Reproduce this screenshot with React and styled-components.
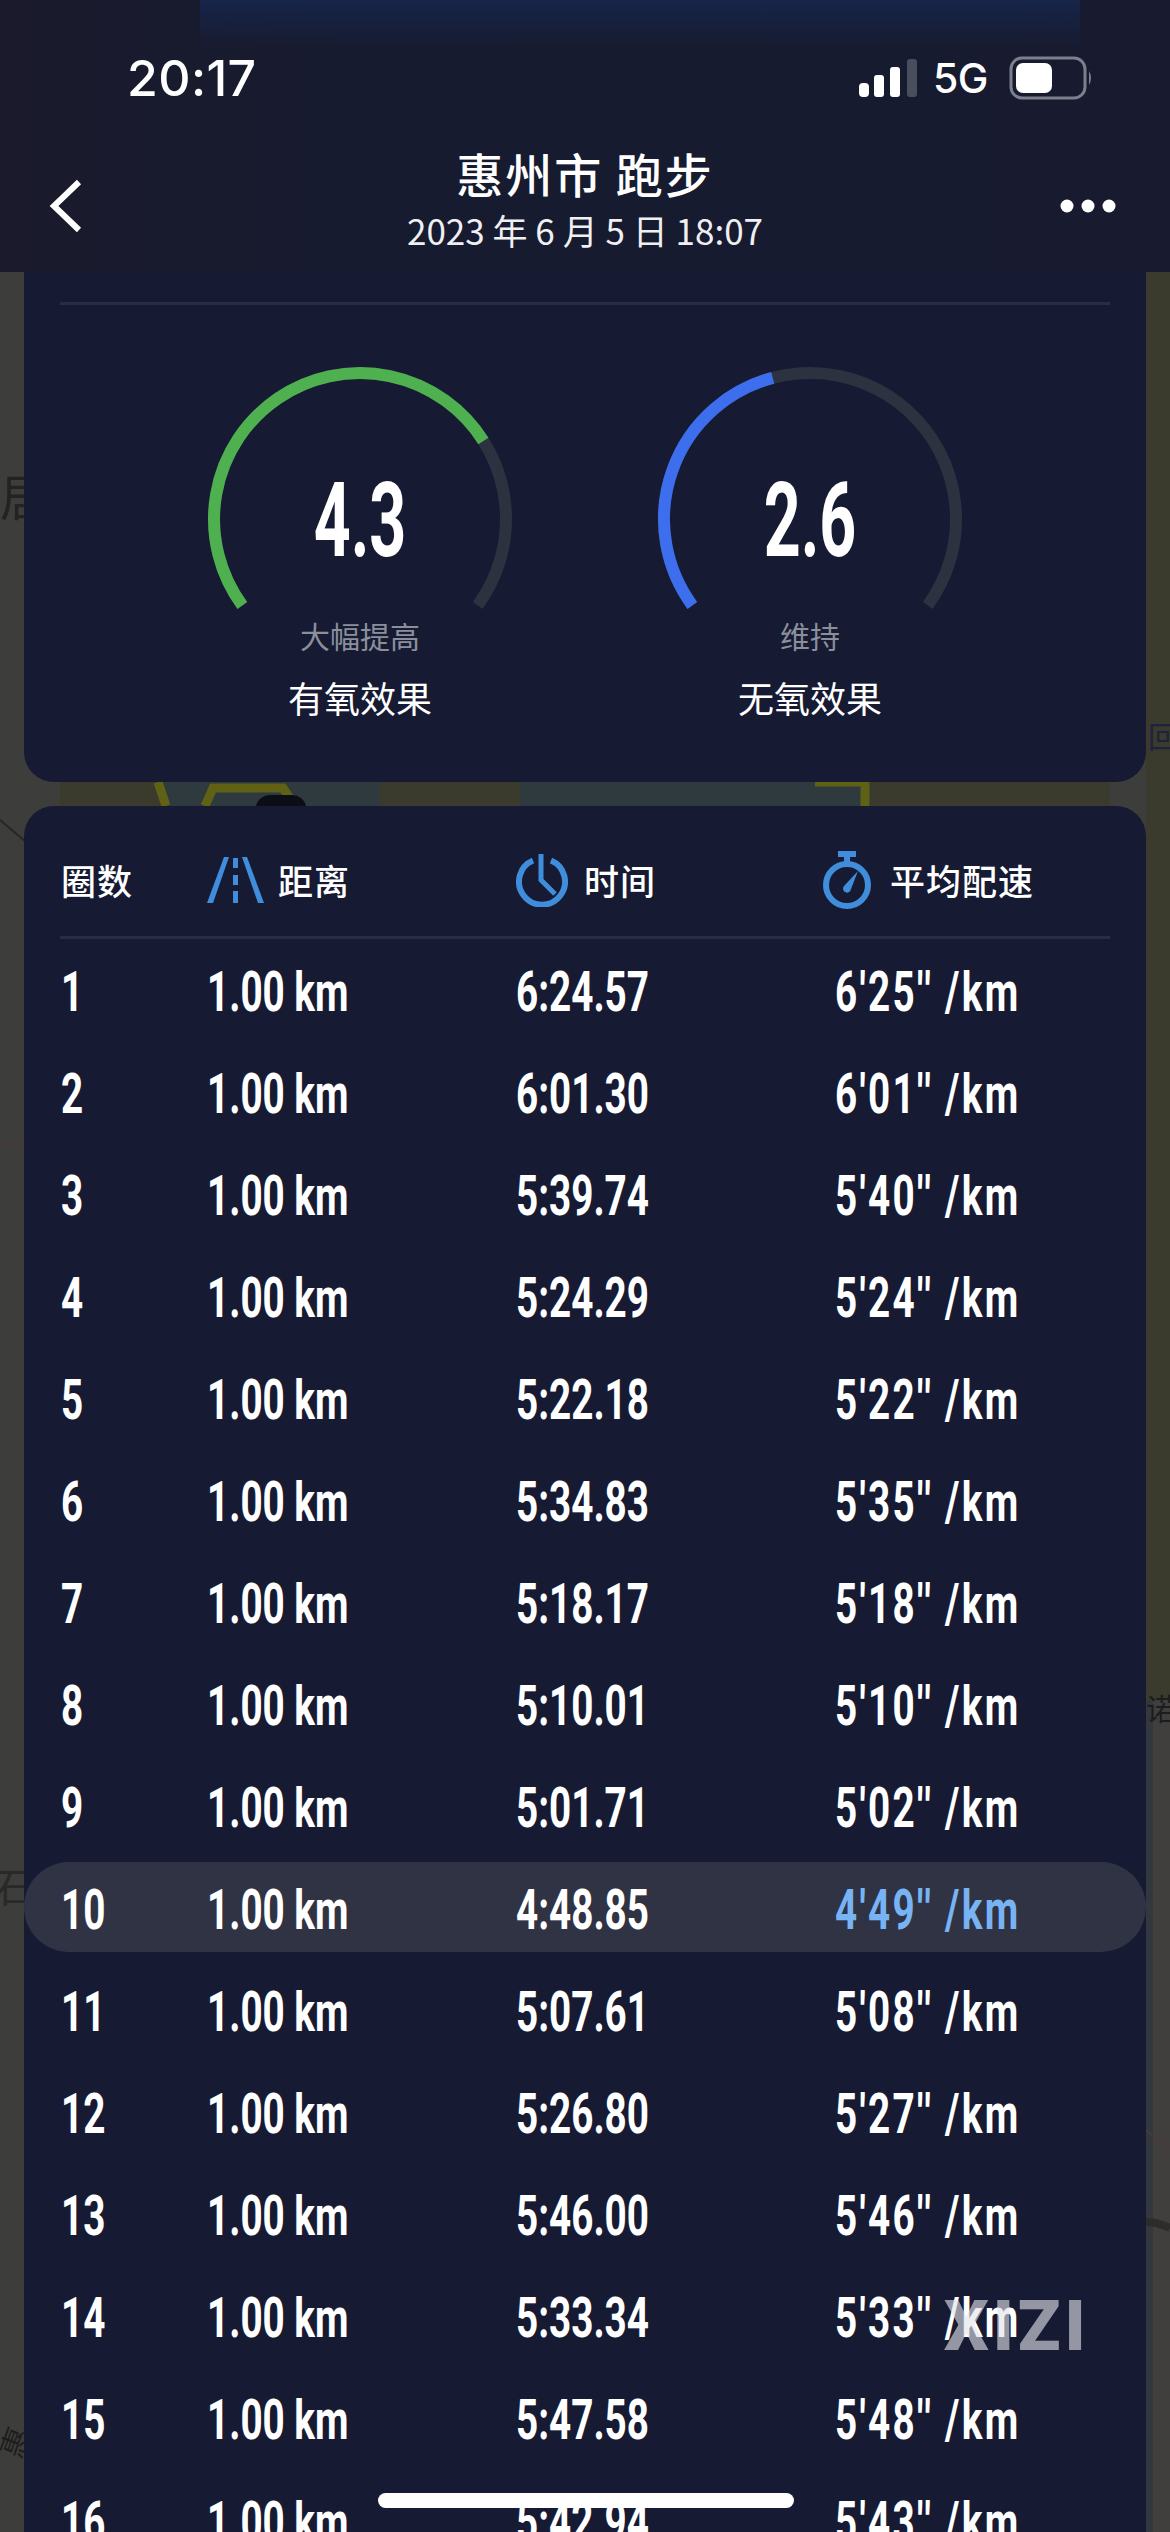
import React from "react";
import styled, { createGlobalStyle } from "styled-components";

const Global = createGlobalStyle`
  html, body { margin: 0; padding: 0; background: #3d3d3b; }
  * { box-sizing: border-box; }
`;

const CJK = `"Noto Sans CJK SC", "Noto Sans", sans-serif`;
const NUM = `Roboto, "Liberation Sans", sans-serif`;

const Screen = styled.div`
  position: relative;
  width: 1170px;
  height: 2532px;
  overflow: hidden;
  color: #fff;
  font-family: ${CJK};
`;
const MapLayer = styled.svg`
  position: absolute;
  inset: 0;
`;
const Page = styled.div`
  position: relative;
  display: flex;
  flex-direction: column;
`;
const Header = styled.header`
  height: 272px;
  padding-top: 50px;
  background:
    linear-gradient(180deg, #16254a 0, #16244600 48px) no-repeat 200px 0 / 880px 48px,
    linear-gradient(90deg, #1a1a2c 0, #171b2f 30%, #171b2f 70%, #181b2f 100%);
`;
const StatusBar = styled.div`
  height: 56px;
  display: flex;
  align-items: center;
  justify-content: space-between;
  padding: 0 77px 0 127px;
`;
const Clock = styled.span`
  font: 500 50px/56px Inter, Roboto, sans-serif;
  letter-spacing: 0.4px;
`;
const StatusRight = styled.div`
  display: flex;
  align-items: center;
  gap: 21px;
`;
const Carrier = styled.span`
  margin-left: -5px;
  font: 500 41px/56px Inter, Roboto, sans-serif;
  letter-spacing: -0.5px;
`;
const Nav = styled.div`
  display: grid;
  grid-template-columns: 1fr auto 1fr;
  align-items: center;
  margin-top: 34px;
  padding: 0 48px;
  height: 120px;
`;
const NavIcon = styled.svg`
  margin-top: 12px;
  margin-right: ${(p) => (p.$side ? "6px" : "0")};
  justify-self: ${(p) => p.$side || "start"};
`;
const TitleBlock = styled.div`
  display: flex;
  flex-direction: column;
  align-items: center;
  gap: 5px;
  margin-bottom: 6px;
`;
const Title = styled.div`
  font: 500 47px/60px ${CJK};
  letter-spacing: 2px;
`;
const Subtitle = styled.div`
  font: 400 35px/44px ${CJK};
  color: #f0f0f3;
`;
const Card = styled.section`
  margin: 0 24px;
  background: #161b33;
`;
const EffectCard = styled(Card)`
  height: 510px;
  padding: 30px 36px 0;
  border-radius: 0 0 30px 30px;
`;
const Divider = styled.div`
  height: 3px;
  background: #272c48;
`;
const Gauges = styled.div`
  display: flex;
  justify-content: center;
  margin: 0 -36px;
  padding-top: 54px;
`;
const GaugeItem = styled.div`
  position: relative;
  width: 450px;
  display: flex;
  flex-direction: column;
  align-items: center;
`;
const GaugeValue = styled.div`
  position: absolute;
  left: 0;
  right: 0;
  top: 110px;
  text-align: center;
  font: 700 104px/104px ${NUM};
  transform: scaleX(0.62);
`;
const GaugeLabel = styled.div`
  margin-top: -7px;
  font: 400 30px/36px ${CJK};
  color: #8b8e9b;
`;
const GaugeName = styled.div`
  margin-top: 22px;
  font: 400 36px/44px ${CJK};
`;
const LapCard = styled(Card)`
  margin-top: 24px;
  border-radius: 30px 30px 0 0;
  height: 1760px;
`;
const LapHeader = styled.div`
  display: grid;
  grid-template-columns: 146px 309px 306px 1fr;
  align-items: center;
  height: 130px;
  padding: 18px 36px 0 37px;
`;
const HeadCell = styled.div`
  display: flex;
  align-items: center;
  gap: ${(p) => p.$gap || 0}px;
  font: 500 35px/44px ${CJK};
  letter-spacing: 1px;
`;
const LapDivider = styled(Divider)`
  margin: 0 36px;
`;
const Rows = styled.div`
  display: flex;
  flex-direction: column;
  gap: 12px;
  padding-top: 8px;
`;
const Row = styled.div`
  display: grid;
  grid-template-columns: 146px 309px 319px 1fr;
  align-items: center;
  flex: none;
  height: 90px;
  padding-left: 37px;
  border-radius: 45px;
  background: ${(p) => (p.$active ? "#2f3344" : "transparent")};
  margin: ${(p) => (p.$active ? "-3px 0 3px" : "0")};
  padding-top: ${(p) => (p.$active ? "6px" : "0")};
`;
const Num = styled.span`
  display: inline-block;
  white-space: pre;
  transform: scaleX(0.69);
  transform-origin: left center;
  font: 700 56px/60px ${NUM};
  color: ${(p) => p.$color || "#fff"};
`;
const PaceNum = styled(Num)`
  letter-spacing: 3.4px;
`;
const Watermark = styled.div`
  position: absolute;
  left: 944px;
  top: 2286px;
  font: 900 70px/80px ${NUM};
  letter-spacing: 4px;
  color: rgba(226, 226, 234, 0.62);
`;
const HomeBar = styled.div`
  position: absolute;
  left: 378px;
  top: 2493px;
  width: 416px;
  height: 15px;
  border-radius: 8px;
  background: #fff;
`;

const polar = (cx, cy, r, deg) => {
  const a = (deg * Math.PI) / 180;
  return [cx + r * Math.cos(a), cy + r * Math.sin(a)];
};
const arc = (from, sweep) => {
  const [x1, y1] = polar(160, 160, 146, from);
  const [x2, y2] = polar(160, 160, 146, from + sweep);
  return `M${x1.toFixed(2)} ${y1.toFixed(2)}A146 146 0 ${sweep > 180 ? 1 : 0} 1 ${x2.toFixed(2)} ${y2.toFixed(2)}`;
};

function Gauge({ value, label, name, color, sweep }) {
  return (
    <GaugeItem>
      <svg width="320" height="265" viewBox="0 0 320 265" fill="none">
        <path d={arc(143.7, 252.6)} stroke="#2d3240" strokeWidth="12" />
        <path d={arc(143.7, sweep)} stroke={color} strokeWidth="12" />
      </svg>
      <GaugeValue>{value}</GaugeValue>
      <GaugeLabel>{label}</GaugeLabel>
      <GaugeName>{name}</GaugeName>
    </GaugeItem>
  );
}

const Road = () => (
  <svg width="57" height="46" viewBox="0 0 57 46" fill="#3f8ddb">
    <path d="M0 46L17 0h5L6 46z" />
    <path d="M57 46L40 0h-5l16 46z" />
    <rect x="26" y="1" width="5" height="10" />
    <rect x="26" y="18" width="5" height="10" />
    <rect x="26" y="34" width="5" height="12" />
  </svg>
);
const ClockIcon = () => (
  <svg width="52" height="54" viewBox="0 0 52 54" fill="none" stroke="#3f8ddb" strokeWidth="6">
    <path d="M17 7.5A23 23 0 1 0 35 7.5" />
    <path d="M25 1V27L39 41" strokeWidth="5" />
  </svg>
);
const Stopwatch = () => (
  <svg width="50" height="58" viewBox="0 0 50 58" fill="none">
    <rect x="16" y="0" width="18" height="6" fill="#3f8ddb" />
    <rect x="22" y="5" width="6" height="6" fill="#3f8ddb" />
    <circle cx="25" cy="34" r="21" stroke="#3f8ddb" strokeWidth="6" />
    <path d="M36 20L29 38a4 4 0 1 1-7-3z" fill="#3f8ddb" />
  </svg>
);

const laps = [
  ["1", "6:24.57", `6'25'' /km`],
  ["2", "6:01.30", `6'01'' /km`],
  ["3", "5:39.74", `5'40'' /km`],
  ["4", "5:24.29", `5'24'' /km`],
  ["5", "5:22.18", `5'22'' /km`],
  ["6", "5:34.83", `5'35'' /km`],
  ["7", "5:18.17", `5'18'' /km`],
  ["8", "5:10.01", `5'10'' /km`],
  ["9", "5:01.71", `5'02'' /km`],
  ["10", "4:48.85", `4'49'' /km`],
  ["11", "5:07.61", `5'08'' /km`],
  ["12", "5:26.80", `5'27'' /km`],
  ["13", "5:46.00", `5'46'' /km`],
  ["14", "5:33.34", `5'33'' /km`],
  ["15", "5:47.58", `5'48'' /km`],
  ["16", "5:42.94", `5'43'' /km`],
];

export default function App() {
  return (
    <Screen>
      <Global />
      <MapLayer width="1170" height="2532" viewBox="0 0 1170 2532">
        <rect width="1170" height="2532" fill="#3d3d3b" />
        <rect x="1146" y="272" width="24" height="1480" fill="#3a3b2d" />
        <rect x="1146" y="1700" width="24" height="832" fill="#403f3d" />
        <rect x="1146" y="1700" width="7" height="832" fill="#33383f" />
        <rect x="60" y="782" width="1050" height="24" fill="#3a3b2c" />
        <rect x="165" y="782" width="215" height="24" fill="#2e3a3e" />
        <rect x="520" y="782" width="350" height="24" fill="#2e3a3e" />
        <path d="M158 782l8 24M205 806l8-18h70l12 18" stroke="#5f6214" strokeWidth="9" fill="none" />
        <path d="M815 782h50v24" stroke="#5f6214" strokeWidth="9" fill="none" />
        <path d="M256 806a14 14 0 0 1 14-11h22a14 14 0 0 1 14 11z" fill="#0b0e15" />
        <path d="M0 820l26 22" stroke="#262626" strokeWidth="2" />
        <path d="M0 1140l26 8" stroke="#4b3a3c" strokeWidth="2" />
        <path d="M1146 2130l24 20" stroke="#4b3a3c" strokeWidth="2" />
        <path d="M1146 2222q12 0 24 6" stroke="#2c2c2c" strokeWidth="8" fill="none" />
        <text x="0" y="516" fontSize="50" fill="#232323" fontFamily={CJK}>居</text>
        <text x="1148" y="748" fontSize="30" fill="#1e2240" fontFamily={CJK}>回</text>
        <text x="1146" y="1720" fontSize="30" fill="#1d1d1d" fontFamily={CJK}>诺</text>
        <text x="-6" y="1902" fontSize="40" fill="#292929" fontFamily={CJK}>石</text>
        <text x="-2" y="2462" fontSize="30" fill="#1e1e1e" fontFamily={CJK} transform="rotate(-70 8 2445)">惠</text>
      </MapLayer>
      <Page>
        <Header>
          <StatusBar>
            <Clock>20:17</Clock>
            <StatusRight>
              <svg width="58" height="38" viewBox="0 0 58 38">
                <rect x="0" y="24" width="10" height="14" rx="4" fill="#fff" />
                <rect x="15" y="16" width="10" height="22" rx="3" fill="#fff" />
                <rect x="31" y="8" width="10" height="30" rx="3" fill="#fff" />
                <rect x="48" y="0" width="10" height="38" rx="3" fill="#4a4d5c" />
              </svg>
              <Carrier>5G</Carrier>
              <svg width="84" height="44" viewBox="0 0 84 44" fill="none">
                <rect x="2" y="2" width="74" height="40" rx="11" stroke="#7c7f8e" strokeWidth="3" />
                <rect x="7" y="7" width="36" height="30" rx="7" fill="#fff" />
                <path d="M80 15q4 7 0 14z" fill="#7c7f8e" />
              </svg>
            </StatusRight>
          </StatusBar>
          <Nav>
            <NavIcon width="34" height="54" viewBox="0 0 34 54" fill="none">
              <path d="M31 3L6 27l25 24" stroke="#fff" strokeWidth="6" />
            </NavIcon>
            <TitleBlock>
              <Title>惠州市 跑步</Title>
              <Subtitle>2023 年 6 月 5 日 18:07</Subtitle>
            </TitleBlock>
            <NavIcon $side="end" width="56" height="14" viewBox="0 0 56 14" fill="#fff">
              <circle cx="7" cy="7" r="6.5" />
              <circle cx="28" cy="7" r="6.5" />
              <circle cx="49" cy="7" r="6.5" />
            </NavIcon>
          </Nav>
        </Header>
        <EffectCard>
          <Divider />
          <Gauges>
            <Gauge value="4.3" label="大幅提高" name="有氧效果" color="#4fb050" sweep={184} />
            <Gauge value="2.6" label="维持" name="无氧效果" color="#3d6eee" sweep={111.5} />
          </Gauges>
        </EffectCard>
        <LapCard>
          <LapHeader>
            <HeadCell>圈数</HeadCell>
            <HeadCell $gap={14}><Road />距离</HeadCell>
            <HeadCell $gap={16}><ClockIcon />时间</HeadCell>
            <HeadCell $gap={18}><Stopwatch />平均配速</HeadCell>
          </LapHeader>
          <LapDivider />
          <Rows>
            {laps.map(([lap, time, pace]) => {
              const active = lap === "10";
              return (
                <Row key={lap} $active={active}>
                  <Num>{lap}</Num>
                  <Num>1.00 km</Num>
                  <Num>{time}</Num>
                  <PaceNum $color={active ? "#78b3f3" : undefined}>{pace}</PaceNum>
                </Row>
              );
            })}
          </Rows>
        </LapCard>
      </Page>
      <Watermark>XIZI</Watermark>
      <HomeBar />
    </Screen>
  );
}
